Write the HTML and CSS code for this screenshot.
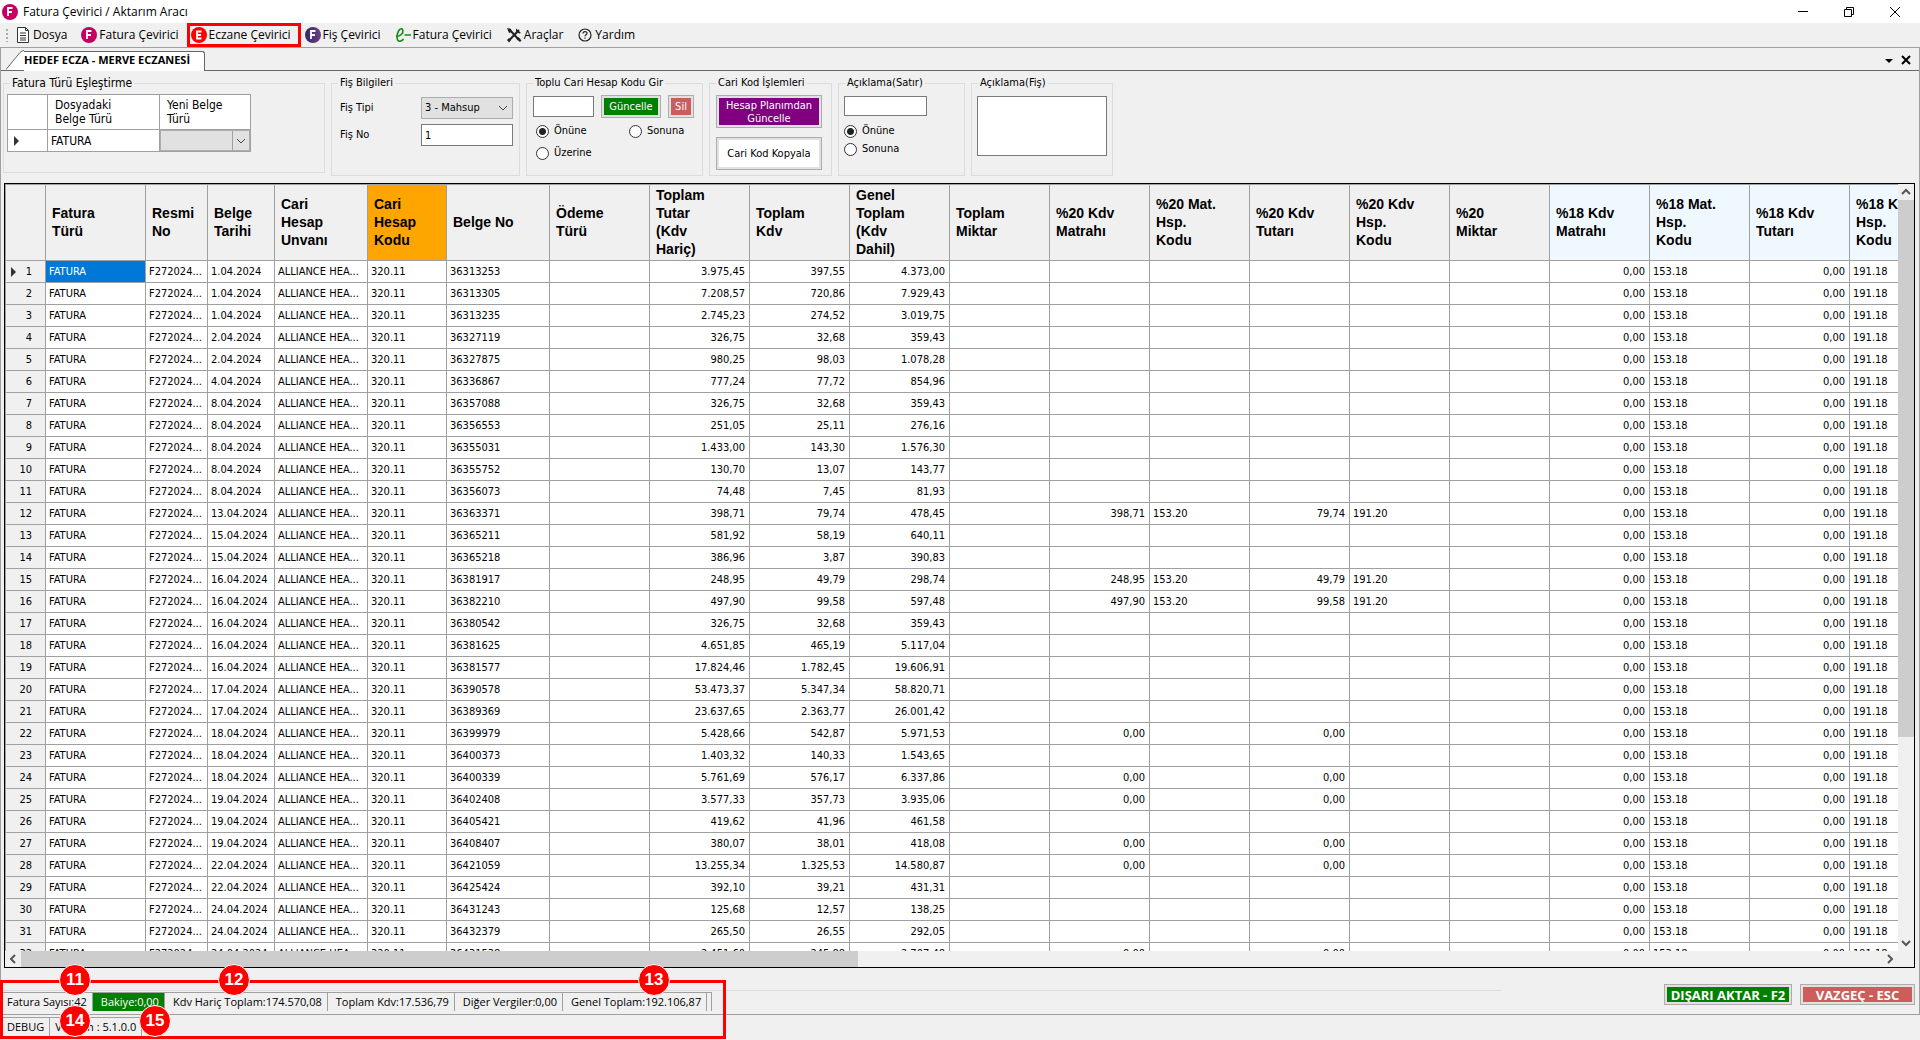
FILE: index.html
```html
<!DOCTYPE html>
<html lang="tr">
<head>
<meta charset="utf-8">
<title>Fatura Çevirici / Aktarım Aracı</title>
<link rel="stylesheet" href="styles.css">
</head>
<body>
<header class="titlebar">
  <svg class="logo" viewBox="0 0 16 16"><circle cx="8" cy="8" r="8" fill="#c3005f"/><path d="M6 12V4h4.500M6 8h4" fill="none" stroke="#fff" stroke-width="1.800"/></svg>
  <h1>Fatura Çevirici / Aktarım Aracı</h1>
  <div class="winbtns">
    <button aria-label="Simge durumu"><svg viewBox="0 0 12 12"><path d="M1 5.500h10" stroke="#000" fill="none"/></svg></button>
    <button aria-label="Geri yükle"><svg viewBox="0 0 12 12"><path d="M1.500 3.500h7v7h-7zM3.500 3.500v-2h7v7h-2" stroke="#000" fill="none"/></svg></button>
    <button aria-label="Kapat"><svg viewBox="0 0 12 12"><path d="M1 1l10 10M11 1L1 11" stroke="#000" fill="none"/></svg></button>
  </div>
</header>
<nav class="menu">
  <span class="grip"></span>
  <button class="m1"><svg viewBox="0 0 16 16"><path d="M2.500.500h8l3 3v12h-11zM10.500.500v3h3M5 6h6M5 8.500h6M5 11h6M5 13h6" fill="#fff" stroke="#333"/></svg>Dosya</button>
  <button class="m2"><svg viewBox="0 0 16 16"><circle cx="8" cy="8" r="8" fill="#c3005f"/><path d="M6 12V4h4.500M6 8h4" fill="none" stroke="#fff" stroke-width="1.800"/></svg>Fatura Çevirici</button>
  <button class="m3"><svg viewBox="0 0 16 16"><circle cx="8" cy="8" r="8" fill="#f00"/><path d="M10.500 4.500H6v7h4.500M6 8h4" fill="none" stroke="#fff" stroke-width="1.800"/></svg>Eczane Çevirici</button>
  <button class="m4"><svg viewBox="0 0 16 16"><defs><linearGradient id="g"><stop offset="0" stop-color="#2b2a6b"/><stop offset="1" stop-color="#6e3f86"/></linearGradient></defs><circle cx="8" cy="8" r="8" fill="url(#g)"/><path d="M6 12V4h4.500M6 8h4" fill="none" stroke="#fff" stroke-width="1.800"/></svg>Fiş Çevirici</button>
  <button class="m5"><svg viewBox="0 0 16 16"><path d="M1 9.500c5-.500 7.500-3.500 6.800-6.300S3.300 1.500 2.200 8c-.700 5 1 6.500 3 6.200 1.500-.200 2.500-1 3.300-2.200M9.500 8H16" fill="none" stroke="#118a11" stroke-width="1.600"/></svg>Fatura Çevirici</button>
  <button class="m6"><svg viewBox="0 0 16 16"><path d="M3 2l10 11M13 3L3 13.500" stroke="#222" stroke-width="2" fill="none"/><path d="M1 1l4 1 .500 3-2.500 1zM10 1.500L15 6l-2 .500-3-2.500zM10.500 12l2-2 3 3.500-1.500 1.500zM1 13l2-2 2 2-2 2.500z" fill="#222"/></svg>Araçlar</button>
  <button class="m7"><svg viewBox="0 0 16 16"><circle cx="8" cy="8" r="6" fill="none" stroke="#222" stroke-width="1.200"/><path d="M6 6.500C6 4 10 4 10 6.300c0 1.500-2 1.400-2 3M8 10.500v1.300" fill="none" stroke="#222" stroke-width="1.200"/></svg>Yardım</button>
</nav>
<main class="page">
  <div class="tabs">
    <svg class="slant" viewBox="0 0 18 20"><path d="M0 20L14 2.500Q16 .500 18 .500V20z" fill="#fff"/><path d="M0 19.500L14 2.500Q16 .500 18 .500" fill="none" stroke="#666"/></svg>
    <span class="tab">HEDEF ECZA - MERVE ECZANESİ</span>
    <svg class="tabctl" viewBox="0 0 30 12"><path d="M2 5h8l-4 4z"/><path d="M19 2l8 8M27 2l-8 8" stroke="#000" stroke-width="2"/></svg>
  </div>
  <div class="groups">
    <fieldset class="g1"><legend>Fatura Türü Eşleştirme</legend>
      <table class="map">
        <tr><th class="rh"></th><th>Dosyadaki<br>Belge Türü</th><th>Yeni Belge<br>Türü</th></tr>
        <tr><td class="rh"><svg viewBox="0 0 6 10"><path d="M0 0l5 5-5 5z" fill="#333"/></svg></td><td>FATURA</td><td class="sel"><select aria-label="Yeni Belge Türü"><option></option></select></td></tr>
      </table>
    </fieldset>
    <fieldset class="g2"><legend>Fiş Bilgileri</legend>
      <div class="form">
        <label for="tip">Fiş Tipi</label><select id="tip"><option>3 - Mahsup</option></select>
        <label for="no">Fiş No</label><input type="text" id="no" value="1">
      </div>
    </fieldset>
    <fieldset class="g3"><legend>Toplu Cari Hesap Kodu Gir</legend>
      <div class="line"><input type="text" aria-label="Cari hesap kodu"><button class="btn green">Güncelle</button><button class="btn red">Sil</button></div>
      <div class="radios two">
        <label><input type="radio" name="a" checked>Önüne</label><label><input type="radio" name="a">Sonuna</label>
        <label><input type="radio" name="a">Üzerine</label>
      </div>
    </fieldset>
    <fieldset class="g4"><legend>Cari Kod İşlemleri</legend>
      <button class="btn purple">Hesap Planımdan<br>Güncelle</button>
      <button class="btn white">Cari Kod Kopyala</button>
    </fieldset>
    <fieldset class="g5"><legend>Açıklama(Satır)</legend>
      <input type="text" aria-label="Açıklama (Satır)">
      <div class="radios">
        <label><input type="radio" name="b" checked>Önüne</label>
        <label><input type="radio" name="b">Sonuna</label>
      </div>
    </fieldset>
    <fieldset class="g6"><legend>Açıklama(Fiş)</legend><textarea aria-label="Açıklama (Fiş)"></textarea></fieldset>
  </div>
  <section class="grid">
    <div class="view">
      <table class="data">
        <colgroup id="cols"></colgroup>
        <thead><tr id="head"></tr></thead>
        <tbody id="rows"></tbody>
      </table>
    </div>
    <div class="vbar"><svg viewBox="0 0 16 16"><path d="M4 10l4-4 4 4" /></svg><div class="track"><i></i></div><svg viewBox="0 0 16 16"><path d="M4 6l4 4 4-4"/></svg></div>
    <div class="hbar"><svg viewBox="0 0 16 16"><path d="M10 4L6 8l4 4"/></svg><div class="track"><i></i></div><svg viewBox="0 0 16 16"><path d="M6 4l4 4-4 4"/></svg></div>
  </section>
  <div class="actions">
    <div class="rule"></div>
    <button class="btn green big">DIŞARI AKTAR - F2</button><button class="btn red big">VAZGEÇ - ESC</button>
  </div>
</main>
<footer class="foot">
  <div class="status totals"><span>Fatura Sayısı:42</span><span class="bal">Bakiye:0,00</span><span>Kdv Hariç Toplam:174.570,08</span><span>Toplam Kdv:17.536,79</span><span>Diğer Vergiler:0,00</span><span>Genel Toplam:192.106,87</span><span class="end"></span></div>
  <div class="status"><span>DEBUG</span><span class="ver">Version : 5.1.0.0</span></div>
  <div class="mark"></div>
  <b class="badge b11">11</b><b class="badge b12">12</b><b class="badge b13">13</b><b class="badge b14">14</b><b class="badge b15">15</b>
</footer>
<script src="app.js"></script>
</body>
</html>
```
FILE: styles.css
```css
* { box-sizing: border-box; }
body { margin: 0; height: 100vh; display: flex; flex-direction: column; overflow: hidden; background: #f0f0f0; color: #000; font: 11px/14px "DejaVu Sans Condensed", "DejaVu Sans", sans-serif; }
button, input, select, textarea { font: inherit; color: inherit; margin: 0; }
svg { display: block; flex: none; }

.titlebar { display: flex; align-items: center; height: 23px; background: #fff; padding-left: 2px; flex: none; }
.titlebar h1 { margin: 0 auto 0 5px; font: 12px/16px "Open Sans", sans-serif; }
.logo { width: 16px; height: 16px; }
.winbtns { display: flex; padding-right: 2px; }
.winbtns button { width: 46px; height: 20px; border: 0; background: none; padding: 0; display: grid; place-items: center; }
.winbtns svg { width: 12px; height: 12px; }

.menu { display: flex; align-items: center; height: 24px; flex: none; padding-left: 6px; }
.grip { width: 2px; height: 13px; margin-right: 5px; background: repeating-linear-gradient(#aaa 0 2px, transparent 2px 4px); }
.menu button { display: flex; align-items: center; gap: 2px; height: 24px; border: 0; background: none; padding: 0 2px; margin-right: 10px; font: 12px/16px "Open Sans", sans-serif; white-space: nowrap; }
.menu svg { width: 16px; height: 16px; }
.menu .m2 { margin-right: 6px; }
.menu .m3 { border: 3px solid #f00; padding: 0 7px 0 1px; margin-right: 2px; }

.page { flex: 1; min-height: 0; display: flex; flex-direction: column; border: 1px solid #a0a0a0; }
.tabs { display: flex; align-items: flex-end; height: 23px; flex: none; border-bottom: 1px solid #696969; padding-left: 5px; }
.slant { width: 18px; height: 20px; }
.tab { height: 20px; margin-bottom: -1px; padding-right: 14px; background: #fff; border: 1px solid #666; border-width: 1px 1px 0 0; border-radius: 0 3px 0 0; font: bold 11px/16px "Open Sans", sans-serif; }
.tabctl { width: 30px; height: 12px; margin: 0 6px 4px auto; }

.groups { display: flex; align-items: flex-start; gap: 6px; padding: 5px 2px 7px; flex: none; }
fieldset { margin: 0; min-width: 0; height: 100px; border: 1px solid #dcdcdc; padding: 5px 0 0; }
legend { padding: 0 2px; margin-left: 6px; white-space: nowrap; line-height: 14px; }
input[type=text], textarea { background: #fff; border: 1px solid #7a7a7a; padding: 0 3px; border-radius: 0; }
textarea { resize: none; display: block; }
select { appearance: none; border: 1px solid #adadad; border-radius: 0; padding: 0 3px; background: #e1e1e1 url("data:image/svg+xml,%3Csvg xmlns='http://www.w3.org/2000/svg' width='10' height='6'%3E%3Cpath d='M1 1l4 4 4-4' fill='none' stroke='%23444'/%3E%3C/svg%3E") no-repeat right 4px center; }
.g1 { width: 322px; height: 97px; font-size: 12px; padding-top: 4px; }
.g2 { width: 189px; }
.g3 { width: 177px; }
.g4 { width: 123px; }
.g5 { width: 127px; }
.g6 { width: 142px; }

.map { border-collapse: collapse; margin-left: 3px; background: #fff; }
.map th, .map td { border: 1px solid #a0a0a0; font-weight: normal; text-align: left; }
.map th { height: 35px; width: 112px; padding: 0 7px; }
.map td { height: 22px; padding: 0 3px; }
.map .rh { width: 40px; padding: 0 6px; }
.map .rh svg { width: 6px; height: 10px; }
.map td.sel { padding: 0; }
.map th:last-child { width: 91px; }
.map select { display: block; width: 100%; height: 21px; background-image: url("data:image/svg+xml,%3Csvg xmlns='http://www.w3.org/2000/svg' width='17' height='20'%3E%3Cpath d='M.5 0v20' stroke='%23a0a0a0'/%3E%3Cpath d='M5 8l4 4 4-4' fill='none' stroke='%23444'/%3E%3C/svg%3E"); background-position: right center; }

.form { display: grid; grid-template-columns: 81px 92px; gap: 5px 0; padding: 2px 0 0 8px; align-items: center; }
.form select, .form input { height: 22px; }

.btn { border: 1px solid #adadad; outline: 2px solid #e1e1e1; outline-offset: -3px; padding: 0; color: #fff; text-align: center; border-radius: 0; }
.green { background: #008000; }
.red { background: #cd5c5c; }
.purple { background: #800080; line-height: 13px; }
.white { background: #fff; color: #000; }
.line { display: flex; gap: 7px; padding-left: 6px; align-items: center; }
.line input { width: 61px; height: 21px; }
.line .green { width: 60px; height: 23px; }
.line .red { width: 26px; height: 23px; }
.radios { display: grid; padding-left: 5px; }
.radios label { display: flex; align-items: center; gap: 5px; height: 18px; }
.two { grid-template-columns: 93px auto; padding: 4px 0 0 9px; row-gap: 4px; }
input[type=radio] { appearance: none; width: 13px; height: 13px; border: 1px solid #333; border-radius: 50%; background: #fff; }
input[type=radio]:checked { background: radial-gradient(#222 0 3px, #fff 4px); }
.g4 .btn { display: block; width: 106px; height: 33px; margin: 0 0 9px 6px; }
.g5 > input { display: block; width: 83px; height: 20px; margin: 1px 0 6px 5px; }
.g6 textarea { width: 130px; height: 60px; margin: 1px 0 0 5px; }

.grid { flex: 1; min-height: 0; margin: 0 4px 0 3px; border: 1px solid #000; display: grid; grid-template: minmax(0, 1fr) 16px / minmax(0, 1fr) 16px; }
.view { overflow: hidden; background: #fff; border: 1px solid #a0a0a0; border-width: 1px 0 0 1px; }
.data { table-layout: fixed; border-collapse: separate; border-spacing: 0; width: 1944px; }
.data th, .data td { border-right: 1px solid #a0a0a0; border-bottom: 1px solid #a0a0a0; overflow: hidden; white-space: nowrap; }
.data th { height: 76px; padding: 0 0 2px 6px; background: #f0f0f0; font: bold 14px/18px "Liberation Sans", Arial, sans-serif; text-align: left; }
.data th.orange { background: #ffa500; }
.data th.blue { background: #f0f8ff; }
.data td { height: 22px; padding: 0 3px; }
.data td.num { text-align: right; padding-right: 4px; }
.data td.idx { background: #f0f0f0; text-align: right; padding-right: 13px; position: relative; }
.data tr:first-child td.idx::before { content: ""; position: absolute; left: 5px; top: 6px; border: 5px solid transparent; border-left-color: #333; border-right: 0; }
.data td.on { background: #0078d7; color: #fff; }
.vbar, .hbar { display: flex; }
.vbar { flex-direction: column; }
.hbar { grid-column: 1 / 3; padding-right: 16px; }
.vbar svg, .hbar svg { width: 16px; height: 16px; fill: none; stroke: #555; stroke-width: 2; }
.track { flex: 1; }
.track i { display: block; background: #cdcdcd; }
.vbar .track i { height: 73%; }
.hbar .track { display: flex; }
.hbar .track i { width: 45%; }

.actions { display: flex; align-items: flex-start; gap: 8px; height: 46px; padding: 16px 4px 0 0; flex: none; }
.rule { flex: 1; max-width: 1500px; height: 1px; margin: 6px auto 0 0; background: #dcdcdc; }
.big { height: 21px; width: 128px; font: bold 13px/16px "Open Sans", sans-serif; }
.big.red { width: 115px; }

.foot { position: relative; flex: none; height: 48px; margin-top: -23px; }
.status { display: flex; height: 19px; margin-left: 3px; font: 11px/18px "Open Sans", sans-serif; }
.status span { padding: 0 5px 0 8px; border: 1px solid #a0a0a0; border-width: 1px 1px 0 0; white-space: nowrap; }
.status span:first-child { padding-left: 4px; }
.status .bal { background: #008000; color: #fff; }
.status .end { padding: 0 4px 0 0; }
.status .ver { padding-left: 5px; }
.totals { margin-bottom: 6px; }
.mark { position: absolute; left: 0; top: -12px; width: 726px; height: 59px; border: 3px solid #f00; }
.badge { position: absolute; width: 32px; height: 32px; border-radius: 50%; background: #f00; border: 1px solid #fff; color: #fff; font: bold 17px/30px "Liberation Sans", sans-serif; text-align: center; }
.b11 { left: 59px; top: -28px; }
.b12 { left: 218px; top: -28px; }
.b13 { left: 638px; top: -28px; }
.b14 { left: 59px; top: 13px; }
.b15 { left: 139px; top: 13px; }
```
FILE: app.js
```js
const columns = [
  ["", 40], ["Fatura<br>Türü", 100], ["Resmi<br>No", 62], ["Belge<br>Tarihi", 67], ["Cari<br>Hesap<br>Unvanı", 93],
  ["Cari<br>Hesap<br>Kodu", 79, "orange"], ["Belge No", 103], ["Ödeme<br>Türü", 100], ["Toplam<br>Tutar<br>(Kdv<br>Hariç)", 100],
  ["Toplam<br>Kdv", 100], ["Genel<br>Toplam<br>(Kdv<br>Dahil)", 100], ["Toplam<br>Miktar", 100], ["%20 Kdv<br>Matrahı", 100],
  ["%20 Mat.<br>Hsp.<br>Kodu", 100], ["%20 Kdv<br>Tutarı", 100], ["%20 Kdv<br>Hsp.<br>Kodu", 100], ["%20<br>Miktar", 100],
  ["%18 Kdv<br>Matrahı", 100, "blue"], ["%18 Mat.<br>Hsp.<br>Kodu", 100, "blue"], ["%18 Kdv<br>Tutarı", 100, "blue"], ["%18 Kdv<br>Hsp.<br>Kodu", 100, "blue"]
];
// date | document no | net | vat | gross | 20% base | 20% vat
const invoices = `1.04.2024|36313253|3.975,45|397,55|4.373,00
1.04.2024|36313305|7.208,57|720,86|7.929,43
1.04.2024|36313235|2.745,23|274,52|3.019,75
2.04.2024|36327119|326,75|32,68|359,43
2.04.2024|36327875|980,25|98,03|1.078,28
4.04.2024|36336867|777,24|77,72|854,96
8.04.2024|36357088|326,75|32,68|359,43
8.04.2024|36356553|251,05|25,11|276,16
8.04.2024|36355031|1.433,00|143,30|1.576,30
8.04.2024|36355752|130,70|13,07|143,77
8.04.2024|36356073|74,48|7,45|81,93
13.04.2024|36363371|398,71|79,74|478,45|398,71|79,74
15.04.2024|36365211|581,92|58,19|640,11
15.04.2024|36365218|386,96|3,87|390,83
16.04.2024|36381917|248,95|49,79|298,74|248,95|49,79
16.04.2024|36382210|497,90|99,58|597,48|497,90|99,58
16.04.2024|36380542|326,75|32,68|359,43
16.04.2024|36381625|4.651,85|465,19|5.117,04
16.04.2024|36381577|17.824,46|1.782,45|19.606,91
17.04.2024|36390578|53.473,37|5.347,34|58.820,71
17.04.2024|36389369|23.637,65|2.363,77|26.001,42
18.04.2024|36399979|5.428,66|542,87|5.971,53|0,00|0,00
18.04.2024|36400373|1.403,32|140,33|1.543,65
18.04.2024|36400339|5.761,69|576,17|6.337,86|0,00|0,00
19.04.2024|36402408|3.577,33|357,73|3.935,06|0,00|0,00
19.04.2024|36405421|419,62|41,96|461,58
19.04.2024|36408407|380,07|38,01|418,08|0,00|0,00
22.04.2024|36421059|13.255,34|1.325,53|14.580,87|0,00|0,00
22.04.2024|36425424|392,10|39,21|431,31
24.04.2024|36431243|125,68|12,57|138,25
24.04.2024|36432379|265,50|26,55|292,05
24.04.2024|36431538|2.451,60|245,88|2.707,48|0,00|0,00`.split("\n").map(r => r.split("|"));

document.getElementById("cols").innerHTML = columns.map(c => `<col style="width:${c[1]}px">`).join("");
document.getElementById("head").innerHTML = columns.map(c => `<th class="${c[2] || ""}">${c[0]}</th>`).join("");
const numeric = new Set([8, 9, 10, 12, 14, 17, 19]);
document.getElementById("rows").innerHTML = invoices.map(([date, no, net, vat, gross, base = "", vat20 = ""], i) => {
  const coded = base && base !== "0,00";
  const cells = [i + 1, "FATURA", "F272024...", date, "ALLIANCE HEA...", "320.11", no, "", net, vat, gross, "", base, coded ? "153.20" : "", vat20, coded ? "191.20" : "", "", "0,00", "153.18", "0,00", "191.18"];
  return "<tr>" + cells.map((v, c) => `<td class="${c === 0 ? "idx" : c === 1 && i === 0 ? "on" : numeric.has(c) ? "num" : ""}">${v}</td>`).join("") + "</tr>";
}).join("");
```
